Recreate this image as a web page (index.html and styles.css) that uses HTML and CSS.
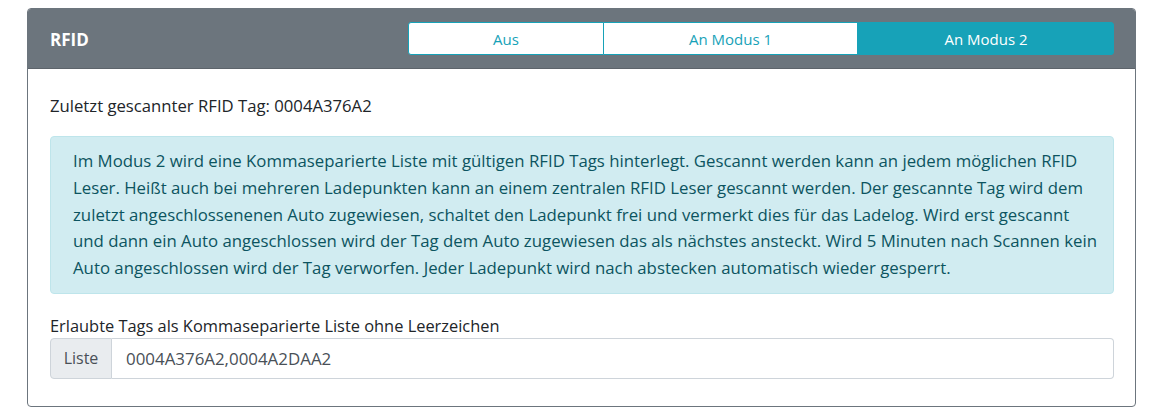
FILE: index.html
```html
<!DOCTYPE html>
<html lang="de">
<head>
<meta charset="utf-8">
<link rel="stylesheet" href="styles.css">
</head>
<body>
<div class="card">
  <div class="card-header">
    <div class="title">RFID</div>
    <div class="btn-group">
      <button class="btn btn-outline b1">Aus</button>
      <button class="btn btn-outline b2">An Modus 1</button>
      <button class="btn btn-active b3">An Modus 2</button>
    </div>
  </div>
  <div class="card-body">
    <div class="last">Zuletzt gescannter RFID Tag: 0004A376A2</div>
    <div class="alert">Im Modus 2 wird eine Kommaseparierte Liste mit gültigen RFID Tags hinterlegt. Gescannt werden kann an jedem möglichen RFID<br>Leser. Heißt auch bei mehreren Ladepunkten kann an einem zentralen RFID Leser gescannt werden. Der gescannte Tag wird dem<br>zuletzt angeschlossenenen Auto zugewiesen, schaltet den Ladepunkt frei und vermerkt dies für das Ladelog. Wird erst gescannt<br>und dann ein Auto angeschlossen wird der Tag dem Auto zugewiesen das als nächstes ansteckt. Wird 5 Minuten nach Scannen kein<br>Auto angeschlossen wird der Tag verworfen. Jeder Ladepunkt wird nach abstecken automatisch wieder gesperrt.</div>
    <div class="label">Erlaubte Tags als Kommaseparierte Liste ohne Leerzeichen</div>
    <div class="input-group">
      <span class="prepend">Liste</span>
      <span class="input">0004A376A2,0004A2DAA2</span>
    </div>
  </div>
</div>
</body>
</html>
```
FILE: styles.css
```css
* { box-sizing: border-box; }
body {
  margin: 0;
  background: #fff;
  font-family: "Open Sans", "Noto Sans", sans-serif;
  font-size: 16px;
  color: #212529;
}
.card {
  margin: 8px 0 0 27px;
  width: 1109px;
  border: 1px solid #6c757d;
  border-radius: 4px;
  overflow: hidden;
}
.card-header {
  background: #6c757d;
  padding: 13px 21px 13px 22px;
  display: flex;
  align-items: center;
  justify-content: space-between;
  border-bottom: 1px solid #5d646b;
}
.title {
  color: #fff;
  font-weight: 700;
  font-size: 17px;
  padding-top: 1px;
}
.btn-group {
  display: flex;
  height: 33px;
}
.btn {
  font-family: inherit;
  font-size: 15px;
  height: 33px;
  padding: 0;
  margin: 0;
  border: 1px solid #17a2b8;
  display: flex;
  align-items: center;
  justify-content: center;
}
.btn-outline {
  background: #fff;
  color: #17a2b8;
}
.btn-active {
  background: #17a2b8;
  color: #fff;
}
.b1 { width: 196px; border-radius: 3px 0 0 3px; }
.b2 { width: 254px; border-left: none; }
.b3 { width: 256px; border-radius: 0 3px 3px 0; }
.card-body {
  padding: 23px 21px 27px 22px;
}
.last {
  font-size: 16.7px;
  line-height: 27px;
}
.alert {
  margin-top: 17px;
  background: #d1ecf1;
  border: 1px solid #bee5eb;
  color: #0c5460;
  border-radius: 4px;
  padding: 11px 22px;
  font-size: 16.8px;
  line-height: 26.8px;
  white-space: nowrap;
}
.label {
  margin-top: 20px;
  font-size: 16.4px;
  line-height: 24px;
}
.input-group {
  display: flex;
  height: 41px;
}
.prepend {
  width: 62px;
  background: #e9ecef;
  border: 1px solid #ced4da;
  border-radius: 4px 0 0 4px;
  color: #495057;
  display: flex;
  align-items: center;
  justify-content: center;
}
.input {
  flex: 1;
  border: 1px solid #ced4da;
  border-left: none;
  border-radius: 0 4px 4px 0;
  color: #495057;
  font-size: 16.9px;
  display: flex;
  align-items: center;
  padding-left: 14px;
}
```
